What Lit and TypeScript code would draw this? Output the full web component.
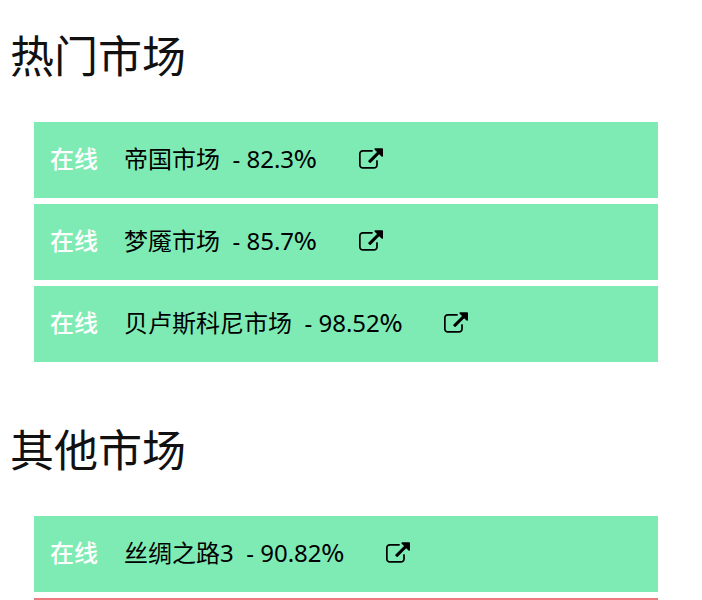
import { LitElement, html, css } from "lit";
import { customElement, property } from "lit/decorators.js";

interface Market {
  name: string;
  uptime: string;
}

const featured: Market[] = [
  { name: "帝国市场", uptime: "82.3" },
  { name: "梦魇市场", uptime: "85.7" },
  { name: "贝卢斯科尼市场", uptime: "98.52" },
];

const others: Market[] = [{ name: "丝绸之路3", uptime: "90.82" }];

@customElement("market-row")
class MarketRow extends LitElement {
  @property({ attribute: false }) market!: Market;

  static styles = css`
    :host {
      display: block;
    }
    .row {
      box-sizing: border-box;
      display: flex;
      align-items: center;
      min-height: 76px;
      padding: 0 16px 2px;
      background: #7febb4;
      color: #000;
      font-size: 24px;
      line-height: 36px;
      white-space: pre;
    }
    .status {
      margin-right: 26px;
      color: #fff;
      font-weight: 500;
    }
    .unit {
      font-family: "Noto Sans CJK SC", sans-serif;
      font-weight: 500;
      line-height: 24px;
    }
    .link {
      display: flex;
      margin-left: 42px;
      padding-bottom: 2px;
      color: inherit;
    }
    .icon {
      width: 24px;
      height: 21px;
      fill: currentColor;
    }
  `;

  render() {
    const { name, uptime } = this.market;
    return html`<div class="row"><span class="status">在线</span><span>${name}  - ${uptime}<span class="unit">%</span></span><a class="link" href="#" aria-label=${name}><svg class="icon" viewBox="0 0 1792 1536" aria-hidden="true"><path d="M1408 928v320q0 119-84.500 203.500T1120 1536H288q-119 0-203.500-84.500T0 1248V416q0-119 84.500-203.500T288 128h704q14 0 23 9t9 23v64q0 14-9 23t-23 9H288q-66 0-113 47t-47 113v832q0 66 47 113t113 47h832q66 0 113-47t47-113V928q0-14 9-23t23-9h64q14 0 23 9t9 23zm384-864v512q0 26-19 45t-45 19-45-19l-176-176-652 652q-10 10-23 10t-23-10L695 983q-10-10-10-23t10-23l652-652-176-176q-19-19-19-45t19-45 45-19h512q26 0 45 19t19 45z"/></svg></a></div>`;
  }
}

@customElement("app-root")
class AppRoot extends LitElement {
  static styles = css`
    :host {
      display: block;
      height: 100vh;
      overflow: hidden;
      background: #fff;
      font-family: "Noto Sans", "Noto Sans CJK SC", sans-serif;
    }
    .section {
      padding-top: 22px;
      margin-bottom: 32px;
    }
    .title {
      margin: 0 10px 32px;
      color: #111;
      font-size: 44px;
      line-height: 68px;
      font-weight: 400;
    }
    .list {
      display: flex;
      flex-direction: column;
      gap: 6px;
      margin: 0 44px 0 34px;
    }
    .offline {
      height: 76px;
      background: #eb7b7e;
    }
  `;

  render() {
    return html`
      <section class="section">
        <h2 class="title">热门市场</h2>
        <div class="list">${featured.map((m) => html`<market-row .market=${m}></market-row>`)}</div>
      </section>
      <section class="section">
        <h2 class="title">其他市场</h2>
        <div class="list">
          ${others.map((m) => html`<market-row .market=${m}></market-row>`)}
          <div class="offline"></div>
        </div>
      </section>
    `;
  }
}
